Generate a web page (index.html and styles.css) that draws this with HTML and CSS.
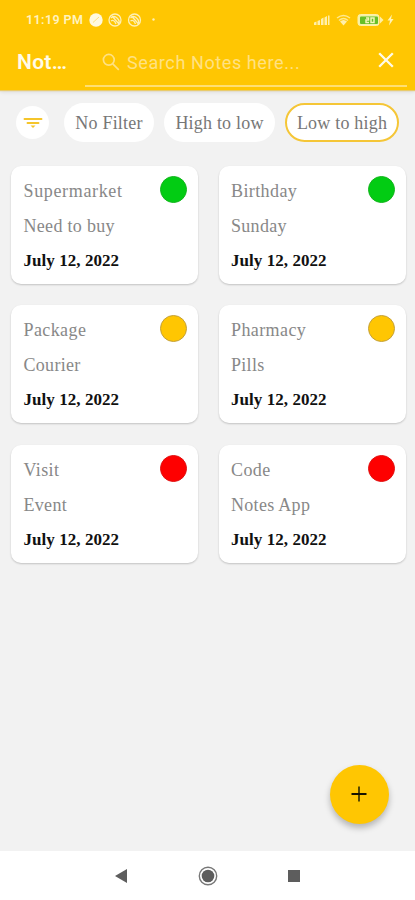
FILE: index.html
```html
<!DOCTYPE html>
<html lang="en">
<head>
<meta charset="utf-8">
<title>Notes</title>
<link rel="stylesheet" href="styles.css">
</head>
<body>
<div class="screen">
  <header class="top">
    <div class="status">
      <span class="time">11:19 PM</span>
      <svg class="notices" width="66" height="16" viewBox="0 0 66 16">
        <circle cx="7" cy="8" r="6.700" fill="#fff9df"/>
        <path d="M4 10.500l6-5.500" stroke="#ffe07a" stroke-width="1"/>
        <g fill="none" stroke="#fff0b5" stroke-width="1.300">
          <circle cx="26" cy="8" r="6"/><path d="M22 6q3-3 6 0t2 5M22 9q3-2 5 3M23 4l7 8"/>
          <circle cx="45.500" cy="8" r="6"/><path d="M41.500 6q3-3 6 0t2 5M41.500 9q3-2 5 3M42.500 4l7 8"/>
        </g>
        <circle cx="64.500" cy="7.500" r="1.200" fill="#fff0b5"/>
      </svg>
      <svg class="system" width="82" height="16" viewBox="0 0 82 16">
        <g fill="#ffefac">
          <path d="M1 10.500l2.500-1V13H1zM4.500 9L7 8v5H4.500zM8 7l2.500-1.500V13H8zM11.500 5.500L14 4v9h-2.500zM15 3.500h1.500V13H15z"/>
          <path d="M30.500 13.500l-3.500-4q3.500-3 7 0z"/>
        </g>
        <path d="M24 6q6.500-5 13 0M26 8.500q4.500-4 9 0" fill="none" stroke="#ffe98e" stroke-width="1.500"/>
        <rect x="45" y="2.500" width="21" height="11" rx="2.500" fill="#f2f3a8" stroke="#fff0a7"/>
        <path d="M67 4.500l3.500 3.500-3.500 3.500z" fill="#fff0a7"/>
        <rect x="47" y="4.500" width="18" height="7.500" rx="1" fill="#67bf27"/>
        <path d="M53 6h2.500v2H53v2.500h3M58 6h3v4.500h-3z" fill="none" stroke="#f4f6b8" stroke-width="1.500"/>
        <path d="M79 2.500l-4.500 6H77l-1 5 4.500-6.500H78z" fill="#fff3b8"/>
      </svg>
    </div>
    <div class="bar">
      <h1 class="title">Not…</h1>
      <div class="search">
        <svg width="18" height="18" viewBox="0 0 18 18" fill="none" stroke="#ffe183" stroke-width="1.700"><circle cx="6.800" cy="6.800" r="5.400"/><path d="M10.800 10.800l6 6"/></svg>
        <span class="hint">Search Notes here...</span>
        <svg class="close" width="16" height="16" viewBox="0 0 16 16" stroke="#fffbe9" stroke-width="2.300"><path d="M1.200 1.200l13.600 13.600M14.800 1.200L1.200 14.800"/></svg>
      </div>
    </div>
  </header>

  <nav class="filters">
    <span class="sort"><svg width="20" height="12" viewBox="0 0 20 12" stroke="#f5c52b" stroke-width="1.900" stroke-linecap="round"><path d="M1.500 2h17M4.500 6h11"/><path d="M7.500 8.500h5L10 11z" fill="#f5c52b" stroke="none"/></svg></span>
    <span class="chip none">No Filter</span>
    <span class="chip high">High to low</span>
    <span class="chip low">Low to high</span>
  </nav>

  <main class="notes">
    <article class="note"><i class="dot green"></i><p class="wide">Supermarket</p><p class="sub">Need to buy</p><p class="date">July 12, 2022</p></article>
    <article class="note"><i class="dot green"></i><p>Birthday</p><p class="sub">Sunday</p><p class="date">July 12, 2022</p></article>
    <article class="note"><i class="dot amber"></i><p>Package</p><p class="sub">Courier</p><p class="date">July 12, 2022</p></article>
    <article class="note"><i class="dot amber"></i><p>Pharmacy</p><p class="sub">Pills</p><p class="date">July 12, 2022</p></article>
    <article class="note"><i class="dot red"></i><p>Visit</p><p class="sub">Event</p><p class="date">July 12, 2022</p></article>
    <article class="note"><i class="dot red"></i><p>Code</p><p class="sub">Notes App</p><p class="date">July 12, 2022</p></article>
  </main>

  <div class="fab"><svg width="16" height="16" viewBox="0 0 16 16"><path d="M8 .5v15" stroke="#574800" stroke-width="2"/><path d="M.5 8h15" stroke="#171300" stroke-width="2"/></svg></div>

  <footer class="system-nav">
    <svg width="14" height="16" viewBox="0 0 14 16"><path d="M1 8l12-7v14z" fill="#5d5d5d"/></svg>
    <svg width="20" height="20" viewBox="0 0 20 20"><circle cx="10" cy="10" r="8.700" fill="none" stroke="#777" stroke-width="1.400"/><circle cx="10" cy="10" r="6.300" fill="#5d5d5d"/></svg>
    <svg width="14" height="14" viewBox="0 0 14 14"><rect x="1" y="1" width="12" height="12" fill="#5d5d5d"/></svg>
  </footer>
</div>
</body>
</html>
```
FILE: styles.css
```css
* { box-sizing: border-box; }
body { margin: 0; font-family: "Liberation Serif", serif; }
svg { display: block; flex: none; }
.screen {
  position: relative;
  display: flex;
  flex-direction: column;
  width: 415px;
  height: 900px;
  background: #f2f2f2;
  overflow: hidden;
}
.top {
  height: 90px;
  background: #ffc602;
  box-shadow: 0 1px 1px #e9cb6b, 0 2px 4px rgba(0, 0, 0, .1);
  font-family: Roboto, sans-serif;
}
.status {
  display: flex;
  align-items: center;
  height: 39px;
  padding: 0 20px 0 26px;
}
.time { width: 63px; font-size: 12.5px; font-weight: 600; color: #fff3c0; letter-spacing: .4px; white-space: nowrap; }
.system { margin-left: auto; }
.bar { display: flex; height: 48px; padding: 0 8px 0 17px; }
.title { width: 68px; margin: 0; font-size: 21px; font-weight: 600; line-height: 46px; letter-spacing: .3px; color: #fffbe8; }
.search {
  display: flex;
  align-items: center;
  flex: 1;
  padding: 0 13px 0 17px;
  border-bottom: 2px solid #ffdf72;
}
.hint { margin-left: 7px; font-size: 18px; letter-spacing: .6px; color: #ffe183; white-space: nowrap; }
.close { margin: 0 0 4px auto; }
.filters { display: flex; align-items: center; height: 75px; padding: 0 16px 10px 16px; }
.sort {
  display: flex;
  align-items: center;
  justify-content: center;
  width: 33px;
  height: 33px;
  margin-right: 15px;
  border-radius: 50%;
  background: #fff;
}
.chip {
  height: 39px;
  border-radius: 20px;
  background: #fff;
  color: #777;
  font-size: 18px;
  line-height: 40px;
  letter-spacing: .2px;
  text-align: center;
  white-space: nowrap;
}
.none { width: 90px; margin-right: 10px; }
.high { width: 111px; margin-right: 10px; }
.low { width: 114px; border: 2px solid #f5c637; line-height: 36px; }
.notes {
  display: grid;
  grid-template-columns: 187px 187px;
  grid-auto-rows: 118px;
  gap: 21.5px 20.5px;
  padding: .5px 9.5px 0 11px;
}
.note {
  position: relative;
  padding: 8px 12.5px;
  border-radius: 10px;
  background: #fff;
  box-shadow: 0 1px 2px rgba(0, 0, 0, .2);
}
.note p { margin: 0; height: 35px; font-size: 18px; line-height: 34px; letter-spacing: .4px; color: #888; }
.note .wide { letter-spacing: .65px; }
.note .sub { letter-spacing: .3px; }
.note .date { font-size: 17px; font-weight: 700; letter-spacing: .05px; color: #111; }
.dot {
  position: absolute;
  top: 10px;
  right: 11px;
  width: 27px;
  height: 27px;
  border-radius: 50%;
}
.green { background: #02cc13; border: 1px solid #12b51c; }
.amber { background: #ffc602; border: 1px solid #c3a03a; }
.red { background: #fe0000; border: 1px solid #e01010; }
.fab {
  position: absolute;
  left: 329.5px;
  top: 764.5px;
  display: flex;
  align-items: center;
  justify-content: center;
  width: 59px;
  height: 59px;
  border-radius: 50%;
  background: #ffc602;
  box-shadow: 0 4px 6px rgba(0, 0, 0, .25);
}
.system-nav {
  display: flex;
  align-items: center;
  justify-content: space-between;
  height: 49px;
  margin-top: auto;
  padding: 0 114px;
  background: #fff;
}
```
